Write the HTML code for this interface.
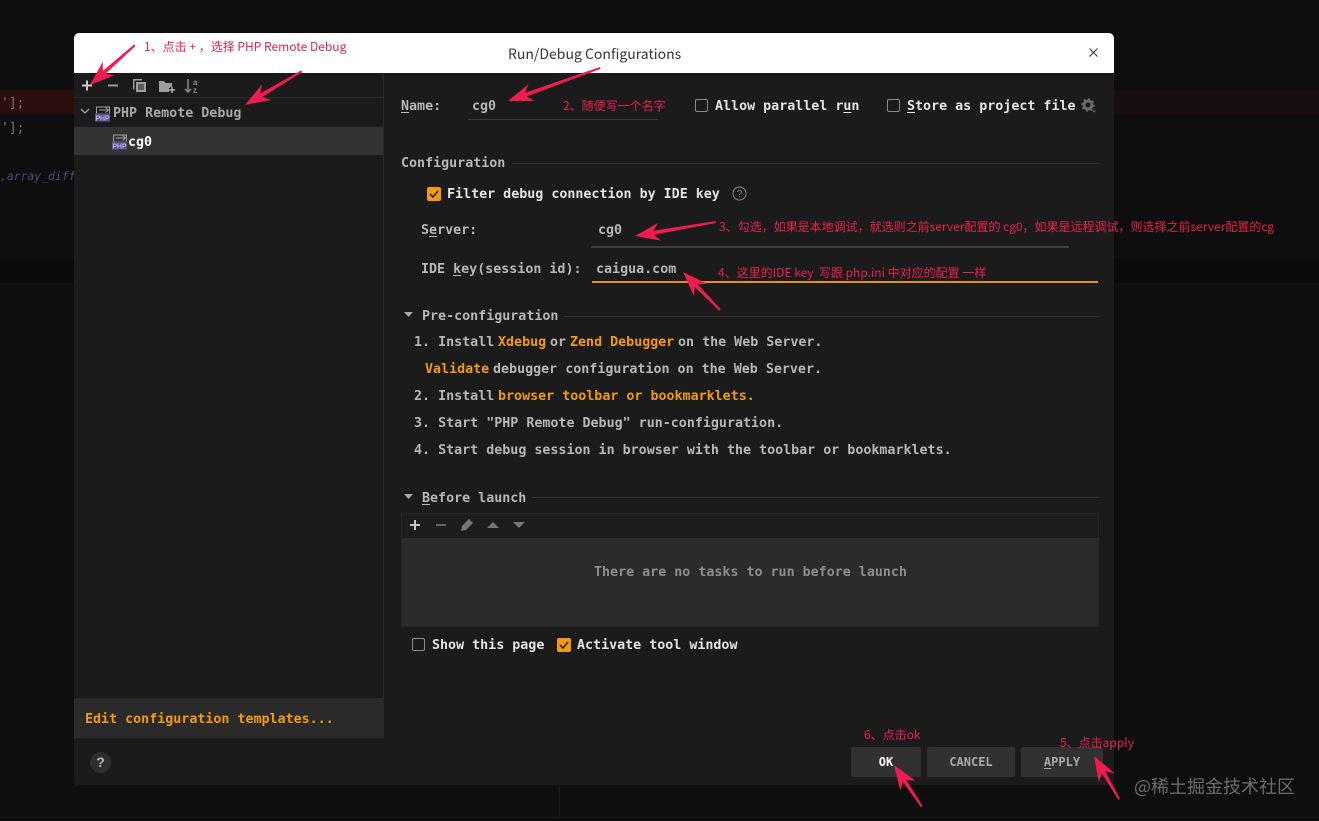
<!DOCTYPE html>
<html><head><meta charset="utf-8"><style>
html,body{margin:0;padding:0;width:1319px;height:821px;overflow:hidden;background:#0e0e0e}
.a{position:absolute}
.t{position:absolute;white-space:pre;margin-top:2px;font:bold 13.33px/18px "DejaVu Sans Mono","Liberation Mono",monospace;color:#e4e4e4}
.g{color:#b4b8b8}.o{color:#f39a14}.n{font-weight:normal}
.r{position:absolute;white-space:pre;font:12px/16px "Noto Sans CJK SC","Liberation Sans",sans-serif;color:#e8214f}
.c{position:absolute;width:11px;height:11px;border:1.5px solid #8a8a8a;border-radius:2px}
.k{position:absolute;width:14px;height:14px;background:#f39a14;border-radius:2px}
.l{position:absolute;height:1px;background:#333}
.b{position:absolute;top:747px;height:30px;background:#313131;border-radius:2px;text-align:center;font:bold 12px/30px "DejaVu Sans Mono","Liberation Mono",monospace;color:#a9a9a9}
u{text-underline-offset:2px}
</style></head><body>
<div class="a" style="left:0;top:90px;width:74px;height:24px;background:#2c0d0e"></div>
<div class="a" style="left:1114px;top:90px;width:205px;height:24px;background:#190e0f"></div>
<div class="a" style="left:0;top:258px;width:74px;height:25px;background:#0a0a0a"></div>
<div class="a" style="left:1114px;top:258px;width:205px;height:25px;background:#0a0a0a"></div>
<div class="a" style="left:0;top:817px;width:1319px;height:1px;background:#1b1b1b"></div>
<div class="a" style="left:559px;top:785px;width:1px;height:32px;background:#1b1b1b"></div>
<div class="t n" style="left:1px;top:93px;color:#777;font-size:13px">'];</div>
<div class="t n" style="left:1px;top:118px;color:#777;font-size:13px">'];</div>
<div class="t n" style="left:0;top:165px;color:#4a4f72;font-size:11.4px;font-style:italic">,array_diff</div>

<div class="a" style="left:74px;top:33px;width:1040px;height:752px;background:#1b1b1c;border-radius:5px 5px 2px 2px;overflow:hidden">
<div class="a" style="left:0;top:0;width:1040px;height:40px;background:#fff"></div>
<div class="a" style="left:0;top:665px;width:310px;height:40px;background:#2a2a2a"></div>
<div class="a" style="left:0;top:94px;width:309px;height:28px;background:#333"></div>
<div class="a" style="left:309px;top:40px;width:1px;height:625px;background:#292929"></div>
<div class="l" style="left:0;top:64px;width:309px;background:#292929"></div>
</div>

<div class="a" style="left:508px;top:43px;font:14px/22px 'Noto Sans CJK SC','Liberation Sans',sans-serif;color:#333;white-space:pre">Run/Debug Configurations</div>
<svg class="a" style="left:1088px;top:47px" width="12" height="12" fill="none" stroke="#333" stroke-width="1.1"><path d="M1.5 1.5l8 8M9.5 1.5l-8 8"/></svg>

<svg class="a" style="left:76px;top:75px" width="130" height="82" fill="none">
<path d="M6 10.5h10M11 5.5v10" stroke="#c8c8c8" stroke-width="2"/>
<path d="M32 10.5h10" stroke="#9a9a9a" stroke-width="2"/>
<path d="M57 4h9v1.500h-7.500v9H57z" fill="#9e9e9e"/><path d="M60 7h10v10H60z" fill="#9e9e9e"/><path d="M62 10h6M62 12h6M62 14h6" stroke="#1b1b1c"/>
<path d="M83 6h5l1.500 2h6.500v9H83z" fill="#9e9e9e"/><path d="M93 15h6M96 12v6" stroke="#1b1b1c" stroke-width="4"/><path d="M93 15h6M96 12v6" stroke="#b0b0b0" stroke-width="1.500"/>
<path d="M112 4v13M109 14l3 3 3-3" stroke="#8a8a8a" stroke-width="1.500"/>
<text x="117" y="10" font-family="Liberation Sans" font-size="8" font-weight="bold" fill="#8a8a8a">a</text><text x="117" y="18" font-family="Liberation Sans" font-size="8" font-weight="bold" fill="#8a8a8a">z</text>
<path d="M5 34l4 4 4-4" stroke="#a0a0a0" stroke-width="1.300"/>
<path d="M20.500 39v-7h13v7M23 35h9M29.500 32.500l3 2.500-3 2.500" stroke="#a0a0a0" stroke-width="1"/><rect x="19" y="38.500" width="15" height="8" fill="#5c5091"/><text x="19.500" y="45.500" font-family="Liberation Sans" font-size="7" font-weight="bold" fill="#b8b0de" textLength="14">PHP</text>
<path d="M37.500 67v-7h13v7M40 63h9M46.500 60.500l3 2.500-3 2.500" stroke="#a0a0a0" stroke-width="1"/><rect x="36" y="66.500" width="15" height="8" fill="#5c5091"/><text x="36.500" y="73.500" font-family="Liberation Sans" font-size="7" font-weight="bold" fill="#b8b0de" textLength="14">PHP</text>
</svg>
<div class="t g" style="left:113px;top:102px;color:#a8a8a8;font-size:13.33px;line-height:19px">PHP Remote Debug</div>
<div class="t" style="left:128px;top:132px;color:#fff">cg0</div>
<div class="t o" style="left:85px;top:709px">Edit configuration templates...</div>
<div class="a" style="left:90px;top:752px;width:21px;height:21px;border-radius:50%;background:#2e2e2e;text-align:center;font:bold 14px/21px 'Liberation Sans',sans-serif;color:#bbb">?</div>

<div class="t g" style="left:401px;top:96px"><u>N</u>ame:</div>
<div class="t g" style="left:472px;top:96px">cg0</div>
<div class="l" style="left:468px;top:119px;width:190px;background:#3b3b3b"></div>
<div class="c" style="left:695px;top:99px"></div>
<div class="t" style="left:715px;top:96px">Allow parallel r<u>u</u>n</div>
<div class="c" style="left:887px;top:99px"></div>
<div class="t" style="left:907px;top:96px"><u>S</u>tore as project file</div>
<svg class="a" style="left:1081px;top:98px" width="16" height="16"><circle cx="7" cy="7" r="4" fill="none" stroke="#6a6a6a" stroke-width="3"/><circle cx="7" cy="7" r="6" fill="none" stroke="#6a6a6a" stroke-width="1.500" stroke-dasharray="2 2.700"/><path d="M11 12.500h4l-2 2z" fill="#6a6a6a"/></svg>

<div class="t g" style="left:401px;top:153px">Configuration</div>
<div class="l" style="left:512px;top:163px;width:587px"></div>
<div class="k" style="left:427px;top:187px"></div>
<svg class="a" style="left:427px;top:187px" width="14" height="14" fill="none" stroke="#2a1a00" stroke-width="1.500"><path d="M3 7l3 3 5-6"/></svg>
<div class="t" style="left:447px;top:184px">Filter debug connection by IDE key</div>
<svg class="a" style="left:732px;top:186px" width="15" height="15"><circle cx="7.500" cy="7.500" r="6.500" fill="none" stroke="#888"/><text x="7.500" y="11" text-anchor="middle" font-family="Liberation Sans" font-size="10" fill="#888">?</text></svg>
<div class="t g" style="left:421px;top:220px">S<u>e</u>rver:</div>
<div class="t g" style="left:598px;top:220px">cg0</div>
<div class="l" style="left:591px;top:246px;width:478px;height:2px;background:#3e3e3e"></div>
<div class="t g" style="left:421px;top:259px">IDE <u>k</u>ey(session id):</div>
<div class="t g" style="left:596px;top:259px">caigua.com</div>
<div class="l" style="left:592px;top:281px;width:506px;height:2px;background:#e0912a"></div>

<svg class="a" style="left:404px;top:312px" width="10" height="6"><path d="M0 0h9L4.500 5z" fill="#aaa"/></svg>
<div class="t g" style="left:422px;top:306px">Pre-configuration</div>
<div class="l" style="left:564px;top:316px;width:535px"></div>
<div class="t g" style="left:414px;top:332px">1. Install</div><div class="t o" style="left:498px;top:332px">Xdebug</div><div class="t g" style="left:550px;top:332px">or</div><div class="t o" style="left:570px;top:332px">Zend Debugger</div><div class="t g" style="left:678px;top:332px">on the Web Server.</div>
<div class="t o" style="left:425px;top:359px">Validate</div><div class="t g" style="left:493px;top:359px">debugger configuration on the Web Server.</div>
<div class="t g" style="left:414px;top:386px">2. Install</div><div class="t o" style="left:498px;top:386px">browser toolbar or bookmarklets.</div>
<div class="t g" style="left:414px;top:413px">3. Start "PHP Remote Debug" run-configuration.</div>
<div class="t g" style="left:414px;top:440px">4. Start debug session in browser with the toolbar or bookmarklets.</div>

<svg class="a" style="left:404px;top:494px" width="10" height="6"><path d="M0 0h9L4.500 5z" fill="#aaa"/></svg>
<div class="t g" style="left:422px;top:488px"><u>B</u>efore launch</div>
<div class="l" style="left:532px;top:497px;width:567px"></div>
<div class="a" style="left:401px;top:513px;width:698px;height:114px;background:#2b2b2b;box-sizing:border-box;border:1px solid #262626"></div>
<div class="a" style="left:402px;top:514px;width:696px;height:24px;background:#1d1d1e"></div>
<svg class="a" style="left:402px;top:514px" width="130" height="24" fill="none">
<path d="M8 11h10M13 6v10" stroke="#c8c8c8" stroke-width="2"/>
<path d="M34 11h10" stroke="#666" stroke-width="2"/>
<path d="M59 17l1-5 7-7 4 4-7 7z" fill="#777"/>
<path d="M85 14l6-6 6 6z" fill="#777"/><path d="M111 8h12l-6 6z" fill="#777"/>
</svg>
<div class="t g" style="left:594px;top:562px;color:#8e8e8e">There are no tasks to run before launch</div>
<div class="c" style="left:412px;top:638px"></div>
<div class="t" style="left:432px;top:635px">Show this page</div>
<div class="k" style="left:557px;top:638px"></div>
<svg class="a" style="left:557px;top:638px" width="14" height="14" fill="none" stroke="#2a1a00" stroke-width="1.500"><path d="M3 7l3 3 5-6"/></svg>
<div class="t" style="left:577px;top:635px">Activate tool window</div>

<div class="b" style="left:851px;width:70px;color:#fff">OK</div>
<div class="b" style="left:927px;width:88px">CANCEL</div>
<div class="b" style="left:1021px;width:82px"><u>A</u>PPLY</div>

<div class="r" style="left:144px;top:39px">1、点击 + ，选择 PHP Remote Debug</div>
<div class="r" style="left:563px;top:98px">2、随便写一个名字</div>
<div class="r" style="left:719px;top:219px">3、勾选，如果是本地调试，就选则之前server配置的 cg0，如果是远程调试，则选择之前server配置的cg</div>
<div class="r" style="left:718px;top:265px">4、这里的IDE key  写跟 php.ini 中对应的配置 一样</div>
<div class="r" style="left:864px;top:727px">6、点击ok</div>
<div class="r" style="left:1060px;top:735px">5、点击apply</div>
<div class="a" style="left:1134px;top:774px;font:18px/24px 'Noto Sans CJK SC','Liberation Sans',sans-serif;color:#6b6b6b;white-space:pre">@稀土掘金技术社区</div>

<svg class="a" style="left:0;top:0" width="1319" height="821" fill="#ee1c50">
<g transform="translate(90 85) rotate(-41.6)"><path d="M0 0L25-9 19-2L60-1V1L19 2L25 9Z"/></g>
<g transform="translate(245 105) rotate(-30.8)"><path d="M0 0L25-9 19-2L66-1V1L19 2L25 9Z"/></g>
<g transform="translate(508 101) rotate(-19.7)"><path d="M0 0L25-9 19-2L98-1V1L19 2L25 9Z"/></g>
<g transform="translate(635 236) rotate(-9.800)"><path d="M0 0L25-9 19-2L82-1V1L19 2L25 9Z"/></g>
<g transform="translate(683 272) rotate(45.800)"><path d="M0 0L25-9 19-2L53-1V1L19 2L25 9Z"/></g>
<g transform="translate(894 765) rotate(56.300)"><path d="M0 0L25-9 19-2L50-1V1L19 2L25 9Z"/></g>
<g transform="translate(1094 756) rotate(59.800)"><path d="M0 0L25-9 19-2L50-1V1L19 2L25 9Z"/></g>
</svg>
</body></html>
